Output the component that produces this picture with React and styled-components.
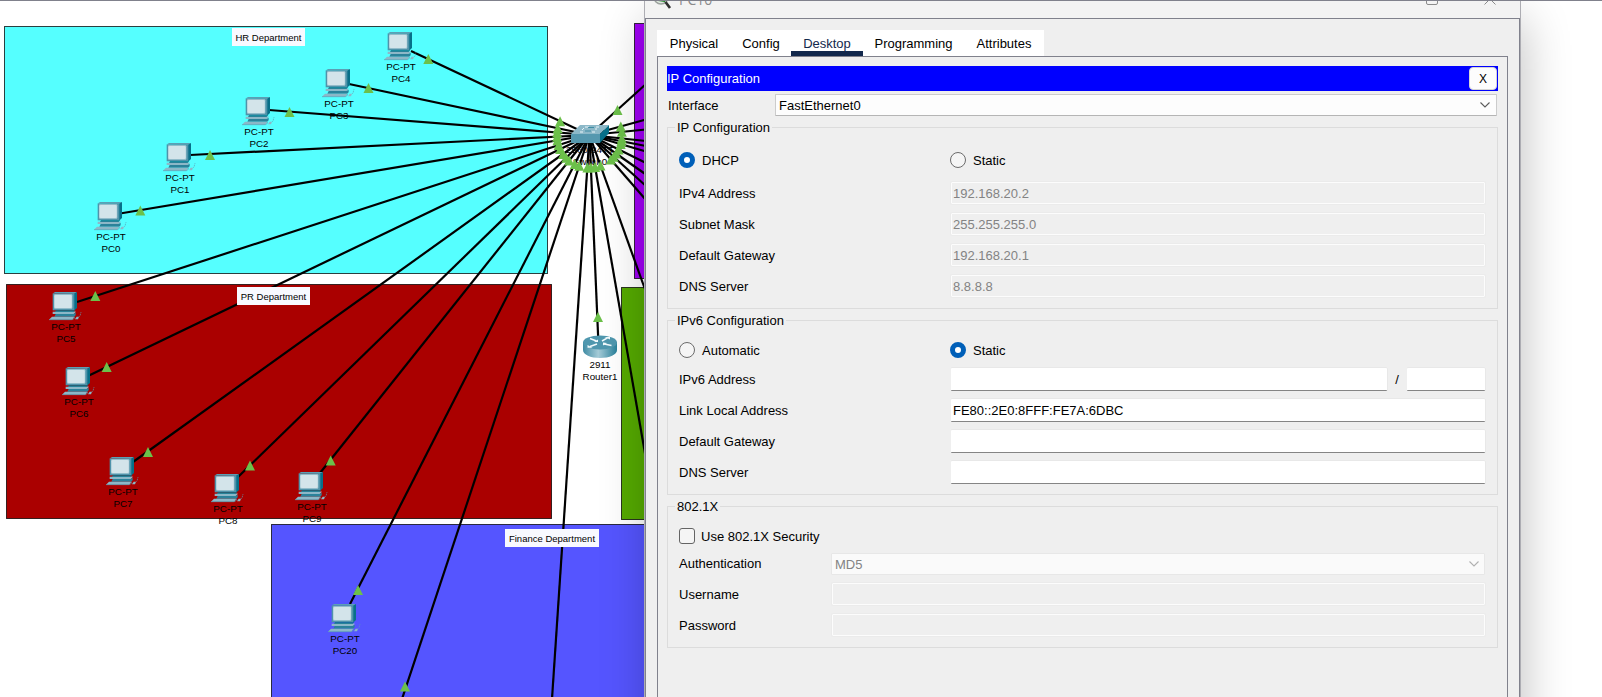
import React from "react";
import styled, { createGlobalStyle } from "styled-components";

const GlobalStyle = createGlobalStyle`
  html, body { margin: 0; height: 100%; overflow: hidden; background: #fff; }
  * { box-sizing: border-box; }
  body, input, button { font-family: "Liberation Sans", Arial, sans-serif; font-size: 13px; color: #000; }
`;

/* ---------- topology workspace ---------- */

const HUB = { x: 589.5, y: 135 };

const zones = [
  { x: 4, y: 26, w: 544, h: 248, fill: "#55ffff" },
  { x: 6, y: 284, w: 546, h: 235, fill: "#aa0000" },
  { x: 634, y: 23, w: 60, h: 256, fill: "#a000f5" },
  { x: 621, y: 287, w: 70, h: 233, fill: "#55aa00" },
  { x: 271, y: 524, w: 500, h: 260, fill: "#5555ff" },
];

const zoneLabels = [
  { text: "HR Department", x: 232, y: 28, w: 73 },
  { text: "PR Department", x: 237, y: 287, w: 73 },
  { text: "Finance Department", x: 505, y: 529, w: 94 },
];

const pcs = [
  { name: "PC0", x: 94, y: 202 },
  { name: "PC1", x: 163, y: 143 },
  { name: "PC2", x: 242, y: 97 },
  { name: "PC3", x: 322, y: 69 },
  { name: "PC4", x: 384, y: 32 },
  { name: "PC5", x: 49, y: 292 },
  { name: "PC6", x: 62, y: 367 },
  { name: "PC7", x: 106, y: 457 },
  { name: "PC8", x: 211, y: 474 },
  { name: "PC9", x: 295, y: 472 },
  { name: "PC20", x: 328, y: 604 },
];

const cables = [
  [411, 51], [349, 84], [269, 110], [190, 155], [120, 213.5], [77, 302], [89, 375.5],
  [133, 462], [238, 477], [320, 473], [350, 604], [402, 699], [552, 699], [598.5, 345],
  [646, 459], [646, 292], [646, 200], [646, 186], [646, 174.5], [646, 163], [646, 151.5],
  [646, 146], [646, 141], [646, 129.5], [646, 119.5],
];
const upperCable = [646, 84];

const linkLights = [
  [428.3, 59], [368.5, 88], [289.5, 112], [210, 155], [140.3, 210.5], [95.3, 296],
  [106.7, 367], [148, 452], [250, 465.5], [330.7, 460.5], [358, 590], [405, 686.5],
  [598, 317], [617.5, 110],
];

const hubLights = cables.map(([x, y]) => {
  const dx = x - HUB.x;
  const dy = y - HUB.y;
  const d = Math.hypot(dx, dy);
  return [HUB.x + (dx / d) * 32.5, HUB.y + (dy / d) * 32.5];
});

const Desktop = styled.main`
  position: relative;
  width: 1602px;
  height: 697px;
  overflow: hidden;
  background: #fff;
  border-top: 1px solid #80818c;
`;

const Workspace = styled.div`
  position: absolute;
  inset: -1px 0 0 0;
`;

const Drawing = styled.svg`
  position: absolute;
  left: 0;
  top: 0;
`;

const Node = styled.div`
  position: absolute;
  left: ${(p) => p.$x}px;
  top: ${(p) => p.$y}px;
  width: ${(p) => p.$w || 34}px;
  display: flex;
  flex-direction: column;
  align-items: center;
  font-size: 9.8px;
  line-height: 12px;
  white-space: nowrap;
`;

const ZoneLabel = styled.div`
  position: absolute;
  left: ${(p) => p.$x}px;
  top: ${(p) => p.$y}px;
  width: ${(p) => p.$w}px;
  height: 18px;
  background: #f8f9ff;
  font-size: 9.5px;
  line-height: 19px;
  text-align: center;
  white-space: nowrap;
`;

const PcIcon = () => (
  <svg width="34" height="29" viewBox="0 0 102 87" style={{ display: "block" }}>
    <path d="M12 4 18 0H84L76 5Z" fill="#5b9fb4" />
    <path d="M75 5 84 0V48L75 56Z" fill="#077089" />
    <path d="M11 4H76V55H11Z" fill="#4f93aa" />
    <rect x="15" y="7" width="55" height="43" rx="3" fill="#a9cad5" />
    <rect x="17" y="9" width="51" height="39" rx="4" fill="#d3e4ea" />
    <path d="M21 55H78L74 60H18Z" fill="#077089" />
    <path d="M11 59H76L79 56V62L74 66H11Z" fill="#8cb7c7" />
    <path d="M20 66H74L80 62V70L75 74H16Z" fill="#2b829a" />
    <path d="M9 74H76L70 83H0Z" fill="#8cb7c7" />
    <path d="M76 74V79L70 83H0" fill="none" stroke="#5b9fb4" strokeWidth="2" />
    <path d="M78 82 83 74H90L87 82Z" fill="#8cb7c7" />
    <path d="M90 74C97 71 92 65 97 60" fill="none" stroke="#5b9fb4" strokeWidth="2" strokeDasharray="4 2" />
  </svg>
);

const SwitchIcon = () => (
  <svg width="38" height="19" viewBox="0 0 38 19" style={{ display: "block" }}>
    <path d="M0 9H29V18H0Z" fill="#5598af" />
    <path d="M9 0H38L29 9H0Z" fill="#8cb8c8" />
    <path d="M38 0V8L29 18V9Z" fill="#07708a" />
    <path d="M14 2H18M13 3 11 5M25 2H28M24 4H26M9 7H12M21 7H24" stroke="#e8f4f8" strokeWidth="1" fill="none" />
    <path d="M17 2.500H23M14 6H20" stroke="#2b829a" strokeWidth="0.800" />
  </svg>
);

const RouterIcon = () => (
  <svg width="34" height="24" viewBox="0 0 34 24" style={{ display: "block" }}>
    <defs>
      <linearGradient id="routerSide" x1="0" x2="1">
        <stop offset="0" stopColor="#3f8ba3" />
        <stop offset="0.45" stopColor="#a5cbd7" />
        <stop offset="1" stopColor="#28819b" />
      </linearGradient>
    </defs>
    <path d="M0 7V15C0 19.500 7.500 23 17 23S34 19.500 34 15V7Z" fill="url(#routerSide)" />
    <ellipse cx="17" cy="7.500" rx="17" ry="7" fill="#4f97ae" />
    <path d="M7 3.500 13.500 6M19 6 24.500 2.800M20 8.800 28.500 10.500M14 9 7 11.500" fill="none" stroke="#f2fafc" strokeWidth="1.500" />
    <path d="M11 7H15V4.500ZM21.500 2H27V4.500ZM20 7.500V10.500L24 8ZM4.500 10V12.800H9.500Z" fill="#f2fafc" />
  </svg>
);

const Light = ({ at: [x, y] }) => (
  <path d={`M${x} ${y - 5}L${x + 5} ${y + 5}H${x - 5}Z`} fill="#6cc04a" />
);

function Topology() {
  return (
    <Workspace>
      <Drawing width="1602" height="697">
        {zones.map((z) => (
          <rect key={z.fill} x={z.x + 0.5} y={z.y + 0.5} width={z.w - 1} height={z.h - 1}
            fill={z.fill} stroke="#000" strokeOpacity="0.75" />
        ))}
        {[...cables, upperCable].map(([x, y], i) => (
          <line key={i} x1={HUB.x} y1={HUB.y} x2={x} y2={y} stroke="#000" strokeWidth="2.2" />
        ))}
      </Drawing>
      {zoneLabels.map((l) => (
        <ZoneLabel key={l.text} $x={l.x} $y={l.y} $w={l.w}>{l.text}</ZoneLabel>
      ))}
      {pcs.map((pc) => (
        <Node key={pc.name} $x={pc.x} $y={pc.y}>
          <PcIcon />
          <span>PC-PT</span>
          <span>{pc.name}</span>
        </Node>
      ))}
      <Node $x={571} $y={125} $w={38}>
        <SwitchIcon />
        <span>2960-24TT</span>
        <span>Switch0</span>
      </Node>
      <Node $x={583} $y={335} $w={34}>
        <RouterIcon />
        <span>2911</span>
        <span>Router1</span>
      </Node>
      <Drawing width="1602" height="697">
        {[...linkLights, ...hubLights].map((p, i) => <Light key={i} at={p} />)}
      </Drawing>
    </Workspace>
  );
}

/* ---------- device window ---------- */

const Window = styled.section`
  position: absolute;
  left: 644px;
  top: -18px;
  width: 877px;
  height: 760px;
  display: flex;
  flex-direction: column;
  background: #efefef;
  border: 1px solid #adadb3;
  box-shadow: 3px 36px 44px rgba(0, 0, 0, 0.24);
`;

const TitleBar = styled.header`
  flex: none;
  height: 34px;
  display: flex;
  align-items: center;
  background: #f3f3f3;
  padding: 0 24px 4px 5px;
  font-family: "Open Sans", "Noto Sans", sans-serif;
  font-size: 14px;
  color: #8b8b8b;
`;

const Title = styled.span`
  flex: 1;
  margin-left: 3px;
`;

const Controls = styled.div`
  display: flex;
  gap: 46px;
`;

const Body = styled.div`
  flex: 1;
  display: flex;
  flex-direction: column;
  border: 1px solid #80818c;
  padding: 11px 11px 0;
`;

const Tabs = styled.nav`
  display: flex;
  align-self: flex-start;
  height: 26px;
  background: #fff;
`;

const Tab = styled.div`
  width: ${(p) => p.$w}px;
  padding-top: 1px;
  line-height: 25px;
  text-align: center;
  color: ${(p) => (p.$active ? "#12284c" : "#000")};
  box-shadow: ${(p) => (p.$active ? "inset 0 -5px #12284c" : "none")};
`;

const Panel = styled.div`
  flex: 1;
  border: 1px solid #80818c;
  padding: 9px;
`;

const PanelHeader = styled.div`
  display: flex;
  align-items: center;
  justify-content: space-between;
  height: 25px;
  padding-right: 1px;
  background: #0000ff;
  color: #fff;
`;

const CloseButton = styled.button`
  width: 28px;
  height: 23px;
  padding: 0;
  border: 1px solid #d5d5d5;
  border-radius: 4px;
  background: #fdfdfd;
  font-size: 12px;
`;

const InterfaceRow = styled.div`
  display: grid;
  grid-template-columns: 107px 722px;
  align-items: center;
  margin: 3px 0 4px 1px;
`;

const Combo = styled.div`
  display: flex;
  align-items: center;
  justify-content: space-between;
  height: 22px;
  margin: ${(p) => (p.$disabled ? "0 0 -1px -1px" : "0")};
  padding: 0 ${(p) => (p.$disabled ? 5 : 6)}px 0 3px;
  border: 1px solid ${(p) => (p.$disabled ? "#e7e7e7" : "#cccccc")};
  border-bottom-color: ${(p) => (p.$disabled ? "#e7e7e7" : "#b5b5b5")};
  border-radius: 1px;
  background: ${(p) => (p.$disabled ? "#fafafa" : "#fdfdfd")};
  color: ${(p) => (p.$disabled ? "#838383" : "#000")};
`;

const Chevron = ({ color }) => (
  <svg width="10" height="6" viewBox="0 0 10 6">
    <path d="M0.500 0.500 5 5 9.500 0.500" fill="none" stroke={color} strokeWidth="1.100" />
  </svg>
);

const Group = styled.fieldset`
  height: ${(p) => p.$h}px;
  margin: 0 0 4px;
  padding: ${(p) => p.$top}px 12px 0 11px;
  border: 1px solid #dcdcdc;
`;

const Legend = styled.legend`
  margin-left: -4px;
  padding: 0 2px;
  height: 15px;
  line-height: 15px;
`;

const ChoiceRow = styled.div`
  display: grid;
  grid-template-columns: 271px 1fr;
  height: 20px;
  margin-bottom: ${(p) => p.$gap}px;
`;

const Choice = styled.label`
  display: flex;
  align-items: center;
  gap: ${(p) => p.$gap || 7}px;
`;

const Radio = styled.span`
  width: 16px;
  height: 16px;
  border-radius: 50%;
  border: ${(p) => (p.$on ? "5px solid #005fb8" : "1px solid #6b6b6b")};
  background: ${(p) => (p.$on ? "#fff" : "#f5f5f5")};
`;

const Checkbox = styled.span`
  width: 16px;
  height: 16px;
  border: 1px solid #646464;
  border-radius: 3px;
  background: #f5f5f5;
`;

const Fields = styled.div`
  display: flex;
  flex-direction: column;
  gap: ${(p) => p.$gap}px;
`;

const FieldRow = styled.div`
  display: grid;
  grid-template-columns: ${(p) => p.$label || 272}px 1fr;
  align-items: center;
`;

const Input = styled.input`
  display: block;
  width: ${(p) => p.$w || "100%"};
  min-width: 0;
  height: 23px;
  padding: 0 0 0 2px;
  border: 0;
  border-bottom: 1px solid #858585;
  border-radius: 1px;
  background: #fff;
  outline: 0;
  box-shadow: 0 -1px #e8e8e8, 1px 0 #e8e8e8;

  &:disabled {
    height: 22px;
    padding: 0 0 0 1px;
    border: 1px solid #fcfcfc;
    background: #efefef;
    color: #838383;
    box-shadow: 0 0 0 1px #ebebeb;
  }
`;

const Prefix = styled.div`
  display: flex;
  align-items: center;
  justify-content: space-between;
`;

const AppMark = () => (
  <svg width="26" height="26" viewBox="0 0 26 26">
    <circle cx="11" cy="11" r="7" fill="#e4e9e4" stroke="#9ba29d" strokeWidth="1.500" />
    <path d="M10 9 16 12 15 16 8 15Z" fill="#16861c" />
    <path d="M15.500 16 20 22" stroke="#303030" strokeWidth="2.600" />
  </svg>
);

const Field = ({ label, value = "", disabled, labelWidth }) => (
  <FieldRow $label={labelWidth}>
    <span>{label}</span>
    <Input value={value} disabled={disabled} readOnly />
  </FieldRow>
);

function DeviceWindow() {
  return (
    <Window>
      <TitleBar>
        <AppMark />
        <Title>PC10</Title>
        <Controls>
          <svg width="12" height="12"><rect x="0.500" y="0.500" width="11" height="11" rx="1.500" fill="none" stroke="#8b8b8b" /></svg>
          <svg width="12" height="12"><path d="M0.500 0.500 11.500 11.500M11.500 0.500 0.500 11.500" stroke="#8b8b8b" /></svg>
        </Controls>
      </TitleBar>
      <Body>
        <Tabs>
          <Tab $w={74}>Physical</Tab>
          <Tab $w={60}>Config</Tab>
          <Tab $w={72} $active>Desktop</Tab>
          <Tab $w={101}>Programming</Tab>
          <Tab $w={80}>Attributes</Tab>
        </Tabs>
        <Panel>
          <PanelHeader>
            IP Configuration
            <CloseButton>X</CloseButton>
          </PanelHeader>
          <InterfaceRow>
            <span>Interface</span>
            <Combo>FastEthernet0<Chevron color="#5c5c5c" /></Combo>
          </InterfaceRow>
          <Group $h={189} $top={15}>
            <Legend>IP Configuration</Legend>
            <ChoiceRow $gap={12}>
              <Choice><Radio $on />DHCP</Choice>
              <Choice><Radio />Static</Choice>
            </ChoiceRow>
            <Fields $gap={9}>
              <Field label="IPv4 Address" value="192.168.20.2" disabled />
              <Field label="Subnet Mask" value="255.255.255.0" disabled />
              <Field label="Default Gateway" value="192.168.20.1" disabled />
              <Field label="DNS Server" value="8.8.8.8" disabled />
            </Fields>
          </Group>
          <Group $h={182} $top={12}>
            <Legend>IPv6 Configuration</Legend>
            <ChoiceRow $gap={8}>
              <Choice><Radio />Automatic</Choice>
              <Choice><Radio $on />Static</Choice>
            </ChoiceRow>
            <Fields $gap={8}>
              <FieldRow>
                <span>IPv6 Address</span>
                <Prefix>
                  <Input $w="436px" readOnly />
                  <span>/</span>
                  <Input $w="78px" readOnly />
                </Prefix>
              </FieldRow>
              <Field label="Link Local Address" value="FE80::2E0:8FFF:FE7A:6DBC" />
              <Field label="Default Gateway" />
              <Field label="DNS Server" />
            </Fields>
          </Group>
          <Group $h={149} $top={14}>
            <Legend>802.1X</Legend>
            <Fields $gap={9}>
              <Choice $gap={6}><Checkbox />Use 802.1X Security</Choice>
              <FieldRow $label={153}>
                <span>Authentication</span>
                <Combo $disabled>MD5<Chevron color="#b0b0b0" /></Combo>
              </FieldRow>
              <Field label="Username" labelWidth={153} disabled />
              <Field label="Password" labelWidth={153} disabled />
            </Fields>
          </Group>
        </Panel>
      </Body>
    </Window>
  );
}

export default function App() {
  return (
    <>
      <GlobalStyle />
      <Desktop>
        <Topology />
        <DeviceWindow />
      </Desktop>
    </>
  );
}
